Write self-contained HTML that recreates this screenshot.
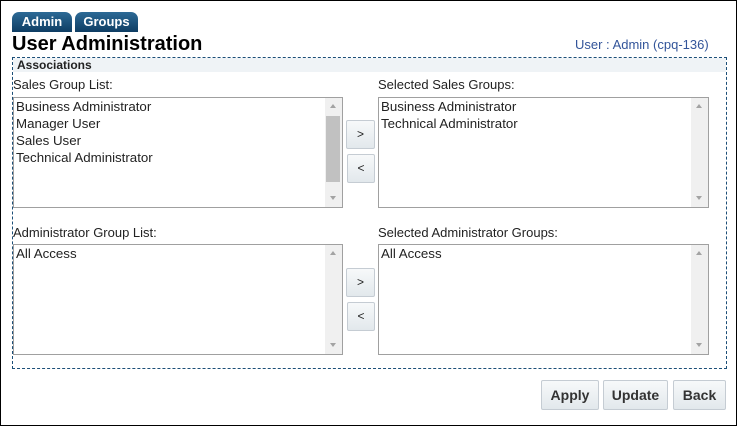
<!DOCTYPE html>
<html><head><style>
*{box-sizing:border-box;margin:0;padding:0}
body{width:737px;height:426px;background:#fff;font-family:"Liberation Sans",Arial,sans-serif;position:relative;overflow:hidden}
.frame{position:absolute;left:0;top:0;width:737px;height:426px;border:1px solid #000}
.a{position:absolute}
.tab{position:absolute;top:12px;height:20px;background:linear-gradient(#2d6a96,#0e3d63);border-radius:7px 7px 0 0;color:#fff;font-weight:bold;font-size:13px;text-align:center;line-height:19px}
.lbl{position:absolute;font-size:13px;color:#222}
.list{position:absolute;border:1px solid #a0a0a0;background:#fff;font-size:13.3px;color:#222;padding:0 0 0 2px;line-height:17px}
.sb{position:absolute;right:0;top:0;bottom:0;width:17px;background:#f0f0f0}
.sb .up,.sb .dn{position:absolute;left:5px;width:0;height:0;border-left:3.5px solid transparent;border-right:3.5px solid transparent}
.sb .up{top:6px;border-bottom:4px solid #a3a3a3}
.sb .dn{bottom:7px;border-top:4px solid #a3a3a3}
.btn{position:absolute;border:1px solid #c5ccd3;border-radius:2px;background:linear-gradient(#f7f9fa,#e2e8ec);font-size:12px;text-align:center;color:#222}
.bb{font-weight:bold;font-size:14px;color:#333;line-height:28px}
</style></head><body>
<div class="frame"></div>
<div class="tab" style="left:12px;width:60px">Admin</div>
<div class="tab" style="left:75px;width:63px">Groups</div>
<div class="a" style="left:12px;top:33px;font-size:20px;font-weight:bold;color:#000">User Administration</div>
<div class="a" style="left:575px;top:37px;font-size:13px;color:#33559a">User : Admin (cpq-136)</div>
<div class="a" style="left:12px;top:57px;width:715px;height:312px;border:1px dashed #1c4f78"></div>
<div class="a" style="left:13px;top:58px;width:713px;height:14px;background:#eff3f6;font-size:12px;font-weight:bold;color:#222;padding-left:4px;line-height:14px">Associations</div>
<div class="lbl" style="left:13px;top:77px">Sales Group List:</div>
<div class="lbl" style="left:378px;top:77px">Selected Sales Groups:</div>
<div class="list" style="left:13px;top:97px;width:330px;height:111px">Business Administrator<br>Manager User<br>Sales User<br>Technical Administrator
<div class="sb"><div class="up"></div><div class="a" style="left:1px;top:18px;width:14px;height:66px;background:#c1c1c1"></div><div class="dn"></div></div></div>
<div class="list" style="left:378px;top:97px;width:331px;height:111px">Business Administrator<br>Technical Administrator
<div class="sb"><div class="up"></div><div class="dn"></div></div></div>
<div class="btn" style="left:346px;top:120px;width:29px;height:29px;line-height:27px">&gt;</div>
<div class="btn" style="left:347px;top:154px;width:28px;height:29px;line-height:27px">&lt;</div>
<div class="lbl" style="left:13px;top:225px">Administrator Group List:</div>
<div class="lbl" style="left:378px;top:225px">Selected Administrator Groups:</div>
<div class="list" style="left:13px;top:244px;width:330px;height:111px">All Access
<div class="sb"><div class="up"></div><div class="dn"></div></div></div>
<div class="list" style="left:378px;top:244px;width:331px;height:111px">All Access
<div class="sb"><div class="up"></div><div class="dn"></div></div></div>
<div class="btn" style="left:346px;top:268px;width:29px;height:29px;line-height:27px">&gt;</div>
<div class="btn" style="left:347px;top:302px;width:28px;height:29px;line-height:27px">&lt;</div>
<div class="btn bb" style="left:541px;top:380px;width:58px;height:30px">Apply</div>
<div class="btn bb" style="left:603px;top:380px;width:65px;height:30px">Update</div>
<div class="btn bb" style="left:673px;top:380px;width:53px;height:30px">Back</div>
</body></html>
